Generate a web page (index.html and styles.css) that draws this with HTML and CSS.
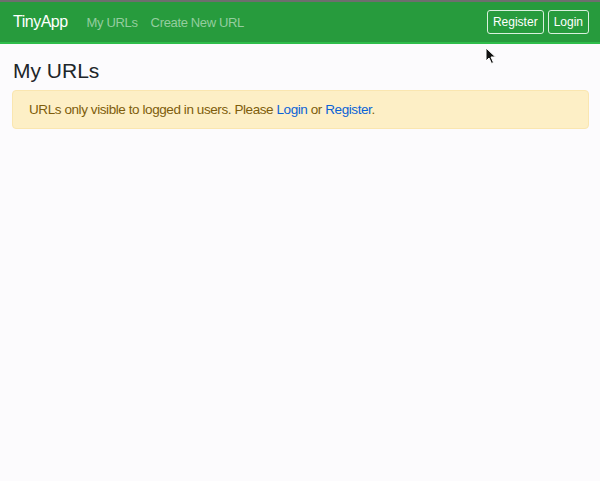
FILE: index.html
```html
<!DOCTYPE html>
<html>
<head>
<meta charset="utf-8">
<link rel="stylesheet" href="styles.css">
</head>
<body>
<nav class="navbar">
  <div class="nav-left">
    <a class="brand" href="#">TinyApp</a>
    <a class="nav-link" href="#">My URLs</a>
    <a class="nav-link" href="#">Create New URL</a>
  </div>
  <div class="nav-right">
    <a class="btn" href="#">Register</a>
    <a class="btn" href="#">Login</a>
  </div>
</nav>
<main class="content">
  <h1 class="title">My URLs</h1>
  <div class="alert">URLs only visible to logged in users. Please <a href="#">Login</a> or <a href="#">Register</a>.</div>
</main>
<svg class="cursor" width="12" height="18" viewBox="0 0 12 18"><path d="M1 1 L1 14 L4 11 L6.5 16.5 L8.5 15.5 L6 10 L10.5 10 Z" fill="#111" stroke="#fff" stroke-width="1"/></svg>
</body>
</html>
```
FILE: styles.css
```css
html, body {
  margin: 0;
  padding: 0;
  background: #fcfbfd;
  font-family: "Liberation Sans", Arial, sans-serif;
  color: #212529;
}
body {
  position: relative;
  height: 481px;
  overflow: hidden;
}
.navbar {
  display: flex;
  align-items: center;
  justify-content: space-between;
  height: 40px;
  background: #279b3d;
  border-top: 2px solid #6e6e6e;
  border-bottom: 2px solid #2fbd4b;
  padding: 0 11px 0 13px;
}
.nav-left {
  display: flex;
  align-items: center;
}
.brand {
  color: #fff;
  text-decoration: none;
  font-size: 16px;
  letter-spacing: -0.5px;
  margin-right: 19px;
}
.nav-link {
  color: #94cd9f;
  text-decoration: none;
  font-size: 13px;
  letter-spacing: -0.35px;
  margin-right: 13px;
}
.nav-right {
  display: flex;
  gap: 4px;
}
.btn {
  display: block;
  color: #fff;
  text-decoration: none;
  font-size: 12px;
  line-height: 20px;
  padding: 1px 5px;
  border: 1px solid #d9f0dd;
  border-radius: 3px;
}
.content {
  padding: 0 11px 0 12px;
}
.title {
  font-size: 21px;
  font-weight: 500;
  line-height: 26px;
  margin: 14px 0 0 1px;
}
.alert {
  margin-top: 6px;
  background: #fdefc6;
  border: 1px solid #fae6b0;
  border-radius: 4px;
  color: #7e5d0b;
  font-size: 13.5px;
  letter-spacing: -0.42px;
  line-height: 21px;
  padding: 8px 16px;
}
.alert a {
  color: #0b63d6;
  text-decoration: none;
}
.cursor {
  position: absolute;
  left: 485px;
  top: 47px;
}
```
